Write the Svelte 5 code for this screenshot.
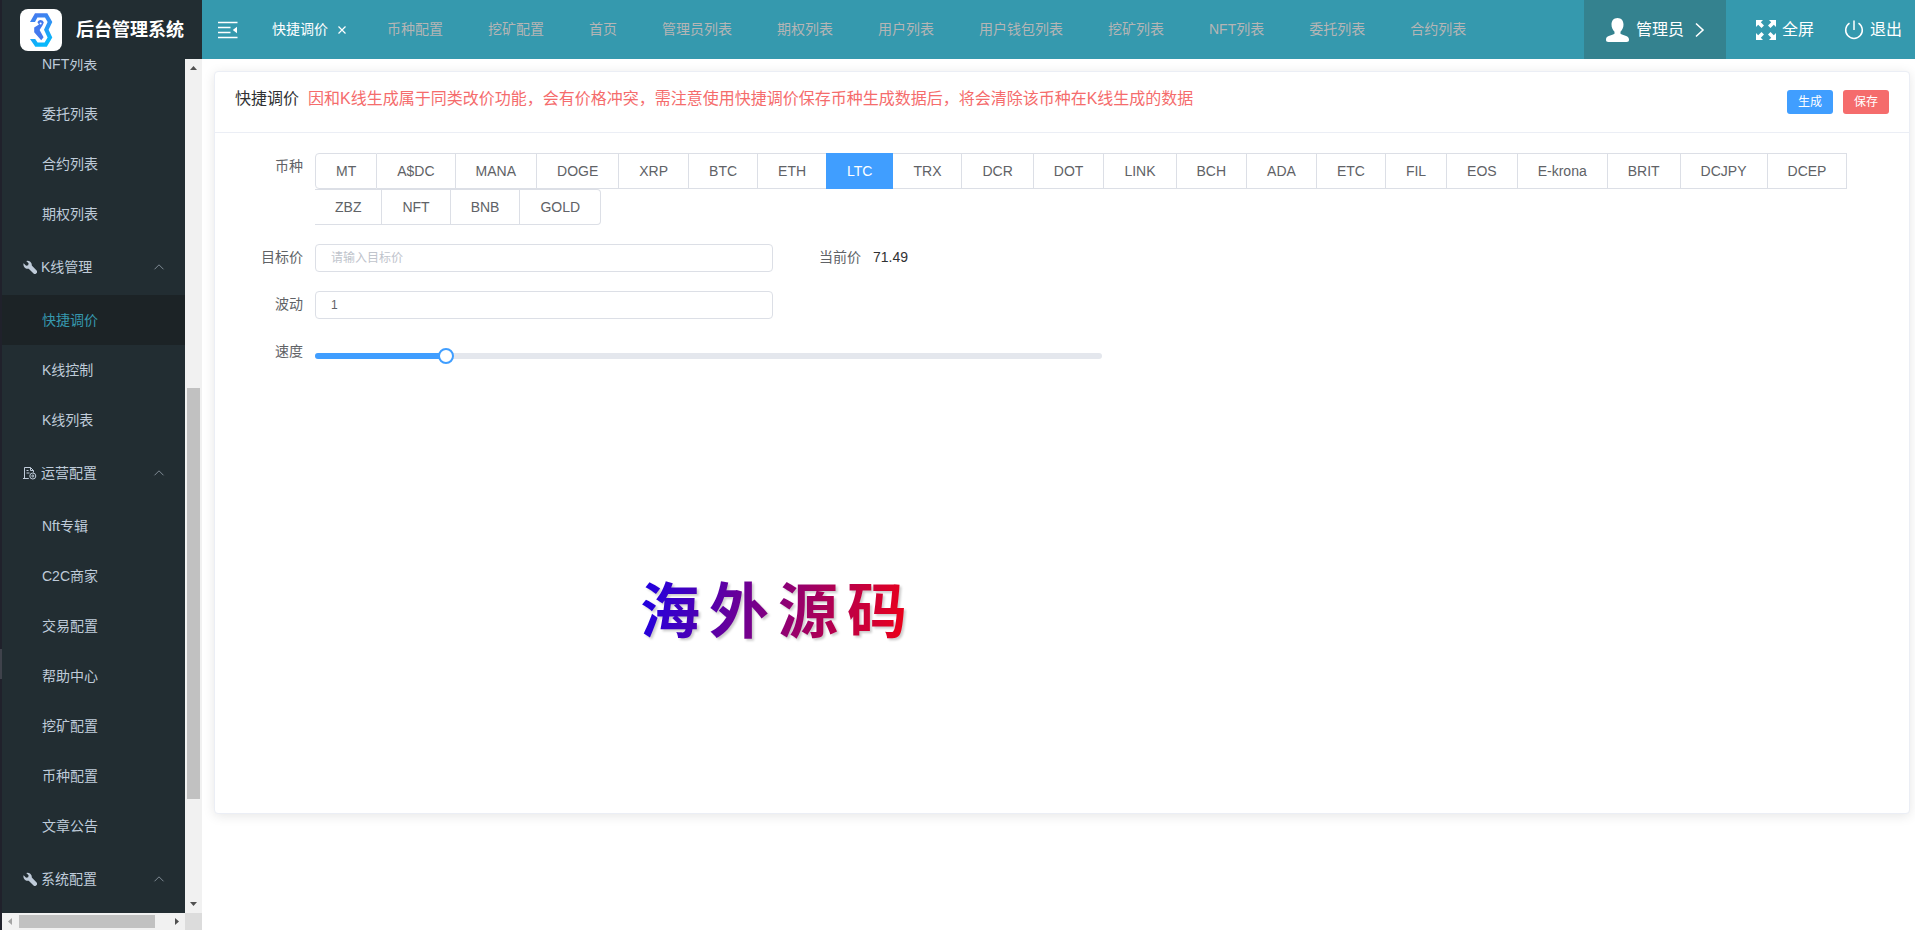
<script>
  const menu = [
    { label: 'NFT列表' },
    { label: '委托列表' },
    { label: '合约列表' },
    { label: '期权列表' },
    { label: 'K线管理', group: 'tools' },
    { label: '快捷调价', active: true },
    { label: 'K线控制' },
    { label: 'K线列表' },
    { label: '运营配置', group: 'doc' },
    { label: 'Nft专辑' },
    { label: 'C2C商家' },
    { label: '交易配置' },
    { label: '帮助中心' },
    { label: '挖矿配置' },
    { label: '币种配置' },
    { label: '文章公告' },
    { label: '系统配置', group: 'tools' }
  ];
  const tabs = ['币种配置', '挖矿配置', '首页', '管理员列表', '期权列表', '用户列表', '用户钱包列表', '挖矿列表', 'NFT列表', '委托列表', '合约列表'];
  const coins = ['MT', 'A$DC', 'MANA', 'DOGE', 'XRP', 'BTC', 'ETH', 'LTC', 'TRX', 'DCR', 'DOT', 'LINK', 'BCH', 'ADA', 'ETC', 'FIL', 'EOS', 'E-krona', 'BRIT', 'DCJPY', 'DCEP', 'ZBZ', 'NFT', 'BNB', 'GOLD'];

  let coin = $state('LTC');
  let target = $state('');
  let wave = $state('1');
  let speed = $state(1);
  const maxSpeed = 6;
</script>

<div class="app">
  <div class="edge"><i></i></div>

  <aside>
    <div class="brand">
      <svg class="logo" viewBox="0 0 42 42" aria-hidden="true">
        <defs>
          <linearGradient id="lg" x1="0" y1="0" x2="0.3" y2="1">
            <stop offset="0" stop-color="#4a76ee" />
            <stop offset="0.5" stop-color="#2f93f3" />
            <stop offset="1" stop-color="#08b8fb" />
          </linearGradient>
        </defs>
        <rect width="42" height="42" rx="8" fill="#fff" />
        <path d="M10 13 15 4.3H27.3L32.3 13 28.6 20.8 32.3 28.6 26.8 37.8H15.3L10 30H15.2L17.6 33.6H24.6L27.6 28.6 24 20.8 27.6 13 25 8.5H17.4L15 13Z" fill="url(#lg)" />
        <path d="M17.5 13.6A3.2 3.2 0 0 1 23.8 13.6L22.6 16.2 19.6 21 23.6 28.2 21.2 31.2 14.2 23.2V18.6L19 15.6Z" fill="#4379ee" />
        <circle cx="20.6" cy="14.4" r="1" fill="#fff" />
      </svg>
      <strong>后台管理系统</strong>
    </div>
    <div class="scroller">
      <nav>
        <ul>
          {#each menu as item}
            <li>
              <a href="#menu" class:group={item.group} class:active={item.active}>
                {#if item.group === 'tools'}
                  <svg class="mi" viewBox="0 0 14 14" aria-hidden="true">
                    <path d="M3.2 1A4.300 4.300 0 0 1 8.800 5.600L13.400 10.200A2 2 0 0 1 10.300 13.300L5.700 8.700A4.300 4.300 0 0 1 .6 3.300L3.100 5.700 5.200 5.200 5.600 3.300Z" fill="#bfcbd9" />
                  </svg>
                {:else if item.group === 'doc'}
                  <svg class="mi" viewBox="0 0 14 14" fill="none" stroke="#bfcbd9" aria-hidden="true">
                    <path d="M5.8 12.5H1.5V1.5H7.5L10.5 4.5V6.5M7.5 1.5V4.5H10.5M3.5 4.5H5.5M3.5 7H6.5M0 12.5H2" />
                    <circle cx="9.8" cy="10" r="3" /><circle cx="9.8" cy="10" r="1" />
                  </svg>
                {/if}
                <span>{item.label}</span>
                {#if item.group}
                  <svg class="up" viewBox="0 0 12 12" fill="none" stroke="#7f8a94" aria-hidden="true"><path d="M1.5 8.3 6 3.8 10.5 8.3" /></svg>
                {/if}
              </a>
            </li>
          {/each}
        </ul>
      </nav>
      <div class="vbar">
        <svg viewBox="0 0 17 17" aria-hidden="true"><path d="M5 11 8.5 7 12 11Z" fill="#505050" /></svg>
        <div class="vtrack"><i></i></div>
        <svg viewBox="0 0 17 17" aria-hidden="true"><path d="M5 6 8.5 10 12 6Z" fill="#505050" /></svg>
      </div>
      <div class="hbar">
        <svg viewBox="0 0 17 17" aria-hidden="true"><path d="M10 5 6 8.5 10 12Z" fill="#a3a3a3" /></svg>
        <div class="htrack"><i></i></div>
        <svg viewBox="0 0 17 17" aria-hidden="true"><path d="M7 5 11 8.5 7 12Z" fill="#505050" /></svg>
      </div>
      <div class="corner"></div>
    </div>
  </aside>

  <div class="main">
    <header>
      <button class="fold" aria-label="折叠菜单">
        <svg viewBox="0 0 20 18" aria-hidden="true">
          <path d="M0 1.5H19.5M0 6.5H12.5M0 11.5H12.5M0 16.5H19.5" stroke="#fff" stroke-width="1.4" />
          <path d="M19 5.7V12.3L14.8 9Z" fill="#fff" />
        </svg>
      </button>
      <nav class="tabs">
        <div class="current">
          <a href="#tab">快捷调价</a>
          <button aria-label="关闭">
            <svg viewBox="0 0 10 10" aria-hidden="true"><path d="M1.5 1.5 8.5 8.5M8.5 1.5 1.5 8.5" stroke="#fff" stroke-width="1.2" /></svg>
          </button>
        </div>
        {#each tabs as t}<a href="#tab">{t}</a>{/each}
      </nav>
      <button class="user">
        <svg class="person" viewBox="0 0 24 24" aria-hidden="true">
          <path d="M12 0C15.800 0 18 2.800 18 6.500 18 9.500 16.800 12 15 13.800V15.800C17 17.300 23.500 17.500 23.500 21.500 23.500 23.300 22.800 24 21 24H3C1.200 24 .5 23.300 .5 21.500 .5 17.500 7 17.300 9 15.800V13.800C7.200 12 6 9.500 6 6.500 6 2.800 8.200 0 12 0Z" fill="#fff" />
        </svg>
        <span>管理员</span>
        <svg class="arrow" viewBox="0 0 10 16" fill="none" stroke="#fff" stroke-width="1.6" aria-hidden="true"><path d="M1 1.500 8 8 1 14.500" /></svg>
      </button>
      <button class="act">
        <svg class="full" viewBox="0 0 20 20" fill="#fff" aria-hidden="true">
          <path d="M0 0H7L4.800 2.200 8 5.500 5.500 8 2.200 4.800 0 7Z" />
          <path d="M20 0V7L17.800 4.800 14.500 8 12 5.500 15.200 2.200 13 0Z" />
          <path d="M0 20V13L2.200 15.200 5.500 12 8 14.500 4.800 17.800 7 20Z" />
          <path d="M20 20H13L15.200 17.800 12 14.500 14.500 12 17.800 15.200 20 13Z" />
        </svg>
        <span>全屏</span>
      </button>
      <button class="act quit">
        <svg class="power" viewBox="0 0 20 20" fill="none" stroke="#fff" stroke-width="1.500" aria-hidden="true">
          <path d="M5.500 3.200A8.300 8.300 0 1 0 14.500 3.200M10 .5V10" />
        </svg>
        <span>退出</span>
      </button>
    </header>

    <main>
      <section class="card">
        <div class="head">
          <h1>快捷调价</h1>
          <p>因和K线生成属于同类改价功能，会有价格冲突，需注意使用快捷调价保存币种生成数据后，将会清除该币种在K线生成的数据</p>
          <div class="btns">
            <button class="blue">生成</button>
            <button class="red">保存</button>
          </div>
        </div>
        <form class="body">
          <div class="item" role="radiogroup" aria-labelledby="coin-label">
            <span class="label" id="coin-label">币种</span>
            <div class="radios">
              {#each coins as c}
                <label class:on={coin === c}><input type="radio" name="coin" value={c} bind:group={coin} />{c}</label>
              {/each}
            </div>
          </div>
          <div class="cols">
            <div class="item">
              <label class="label" for="target">目标价</label>
              <input class="text" id="target" placeholder="请输入目标价" bind:value={target} />
            </div>
            <div class="item">
              <span class="label">当前价</span>
              <span class="value">71.49</span>
            </div>
          </div>
          <div class="cols">
            <div class="item">
              <label class="label" for="wave">波动</label>
              <input class="text" id="wave" bind:value={wave} />
            </div>
          </div>
          <div class="item">
            <label class="label" for="speed">速度</label>
            <div class="slider">
              <div class="fill" style="width: {(speed / maxSpeed) * 100}%"></div>
              <input id="speed" type="range" min="0" max={maxSpeed} bind:value={speed} />
            </div>
          </div>
        </form>
        <div class="mark"><span>海</span><span>外</span><span>源</span><span>码</span></div>
      </section>
    </main>
  </div>
</div>

<style>
  :global(body) {
    background: #fff;
    font-family: "Liberation Sans", "Noto Sans CJK SC", sans-serif;
    font-size: 14px;
    color: #303133;
  }
  * { box-sizing: border-box; }
  button, input { font: inherit; color: inherit; }
  button { border: 0; padding: 0; background: none; cursor: pointer; }
  a { color: inherit; text-decoration: none; }
  svg { display: block; flex: none; }

  .app { display: flex; height: 100vh; overflow: hidden; }
  .edge { width: 2px; background: #20212b; display: flex; align-items: flex-end; }
  .edge i { width: 2px; height: 30px; margin-bottom: 251px; background: #3f424b; }

  aside { width: 200px; flex: none; display: flex; flex-direction: column; background: #222d32; }
  .brand { height: 59px; flex: none; display: flex; align-items: center; gap: 14px; padding-left: 18px; color: #fff; font-size: 18px; white-space: nowrap; }
  .brand strong { padding-bottom: 4px; }
  .logo { width: 42px; height: 42px; }
  .scroller { flex: 1; min-height: 0; display: grid; grid-template: minmax(0, 1fr) 17px / minmax(0, 1fr) 17px; }
  .scroller nav { overflow: hidden; }
  ul { list-style: none; margin: -20px 0 0; padding: 0; }
  li a { display: flex; align-items: center; height: 50px; padding-left: 40px; color: #bfcbd9; }
  li a.group { height: 56px; padding: 0 20px 0 21px; gap: 4px; }
  li a.active { background: #1c2326; color: #3698ae; }
  li span { padding-bottom: 2px; }
  .mi { width: 14px; height: 14px; }
  .up { width: 12px; height: 12px; margin-left: auto; }
  .vbar, .hbar { display: flex; background: #f1f1f1; }
  .vbar { flex-direction: column; }
  .vbar svg, .hbar svg { width: 17px; height: 17px; }
  .vtrack { flex: 1; display: flex; flex-direction: column; align-items: center; }
  .vtrack::before { content: ""; flex: 312; }
  .vtrack i { width: 13px; flex: 411; background: #c1c1c1; }
  .vtrack::after { content: ""; flex: 97; }
  .htrack { flex: 1; display: flex; align-items: center; }
  .htrack i { width: 91%; height: 13px; background: #c1c1c1; }
  .corner { background: #dcdcdc; }

  .main { flex: 1; min-width: 0; display: flex; flex-direction: column; }
  header { height: 59px; flex: none; display: flex; align-items: stretch; background: #3599ae; color: #fff; }
  header span, .tabs a { padding-bottom: 4px; }
  .fold { padding: 0 16px; }
  .fold svg { width: 20px; height: 18px; }
  .tabs { flex: 1; display: flex; align-items: center; gap: 45px; padding-left: 18px; color: #b5b5b5; white-space: nowrap; overflow: hidden; }
  .current { display: flex; align-items: center; gap: 9px; color: #fff; margin-right: -5px; }
  .current svg { width: 10px; height: 10px; }
  .user { display: flex; align-items: center; padding: 0 20px 0 21px; gap: 6px; background: #34828f; font-size: 16px; }
  .person { width: 25px; height: 24px; }
  .arrow { width: 10px; height: 16px; margin: 0 1px 0 5px; }
  .act { display: flex; align-items: center; gap: 6px; padding-left: 30px; font-size: 16px; }
  .quit { padding-right: 13px; }
  .full, .power { width: 20px; height: 20px; }

  main { padding: 12px 5px 0 12px; }
  .card { position: relative; min-height: calc(100vh - 187px); background: #fff; border: 1px solid #ebeef5; border-radius: 4px; box-shadow: 0 2px 12px rgba(0, 0, 0, 0.1); }
  .head { display: flex; align-items: flex-start; gap: 9px; padding: 18px 20px; border-bottom: 1px solid #ebeef5; font-size: 16px; line-height: 18px; }
  h1, p { margin: 0; font-size: 16px; font-weight: 400; }
  p { color: #f56c6c; }
  .btns { display: flex; gap: 10px; margin-left: auto; }
  .btns button { width: 46px; height: 24px; border-radius: 3px; color: #fff; font-size: 12px; }
  .blue { background: #409eff; }
  .red { background: #f56c6c; }

  .body { display: flex; flex-direction: column; gap: 19px; padding: 20px; }
  .item { display: flex; min-width: 0; min-height: 28px; line-height: 26px; }
  .label { width: 80px; flex: none; padding-right: 12px; text-align: right; color: #606266; }
  .cols { display: grid; grid-template-columns: repeat(3, minmax(0, 1fr)); gap: 20px; }
  .radios { flex: 1; display: flex; flex-wrap: wrap; }
  .radios label { height: 36px; padding: 0 20px; border: 1px solid #dcdfe6; border-left: 0; line-height: 34px; color: #606266; cursor: pointer; }
  .radios label:first-child { border-left: 1px solid #dcdfe6; border-radius: 4px 0 0 4px; }
  .radios label:last-child { border-radius: 0 4px 4px 0; }
  .radios label.on { background: #409eff; border-color: #409eff; color: #fff; box-shadow: -1px 0 0 0 #409eff; }
  .radios input { position: absolute; opacity: 0; width: 0; height: 0; margin: 0; }
  .text { flex: 1; min-width: 0; height: 28px; padding: 0 15px; border: 1px solid #dcdfe6; border-radius: 4px; background: #fff; color: #606266; font-size: 12px; outline: 0; }
  .text::placeholder { color: #c0c4cc; }
  .slider { position: relative; flex: 0 0 calc(50% - 40px); height: 6px; margin-top: 15px; border-radius: 3px; background: #e4e7ed; }
  .fill { height: 6px; border-radius: 3px 0 0 3px; background: #409eff; }
  .slider input { position: absolute; left: -8px; top: -5px; width: calc(100% + 16px); height: 16px; margin: 0; background: none; appearance: none; }
  .slider input::-webkit-slider-thumb { appearance: none; width: 16px; height: 16px; border: 2px solid #409eff; border-radius: 50%; background: #fff; }

  .mark {
    position: absolute; left: 425px; top: 493px; display: flex; gap: 9px;
    font-family: "Noto Sans CJK SC", sans-serif; font-size: 60px; font-weight: 700; line-height: 84px;
    color: transparent; background: linear-gradient(100deg, #1a00e6, #f00014); background-clip: text;
    filter: drop-shadow(2px 2px 1px rgba(0, 0, 0, 0.2)); pointer-events: none;
  }
</style>
